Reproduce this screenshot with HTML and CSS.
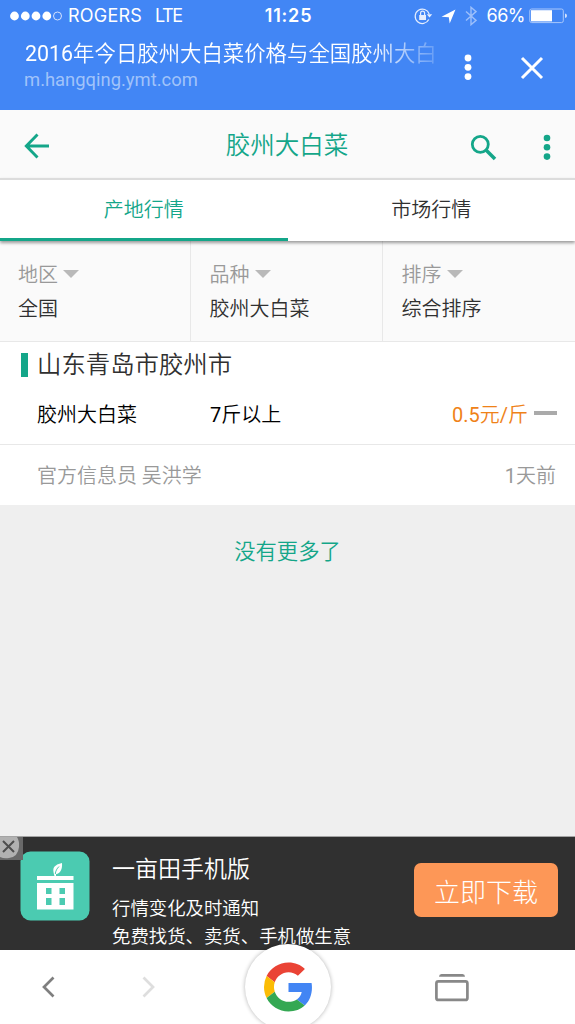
FILE: index.html
```html
<!DOCTYPE html>
<html lang="zh-CN">
<head>
<meta charset="utf-8">
<title>胶州大白菜</title>
<link rel="stylesheet" href="styles.css">
</head>
<body>
<div class="screen">
  <div class="browser">
    <div class="status">
      <div class="status-left">
        <svg class="signal" width="52" height="10" viewBox="0 0 52 10"><g fill="#fff"><circle cx="4.5" cy="5" r="4.4"/><circle cx="15.3" cy="5" r="4.4"/><circle cx="26" cy="5" r="4.4"/><circle cx="36.8" cy="5" r="4.4"/></g><circle cx="47.5" cy="5" r="4" fill="none" stroke="#d4e2fd"/></svg>
        <span class="carrier">ROGERS</span><span class="network">LTE</span>
      </div>
      <span class="clock">11:25</span>
      <div class="status-right">
        <svg width="19" height="18" viewBox="0 0 19 18" fill="none" stroke="#e6eefe" stroke-width="1.2"><path d="M14.8 12.6A7.2 7.2 0 1 1 15.2 7"/><path d="M12.8 7.2h5.4l-2.700 3.400z" fill="#e6eefe" stroke="none"/><rect x="5.2" y="8" width="6.8" height="5" fill="#e6eefe" stroke="none"/><path d="M6.600 8V6.200a2 2 0 0 1 4 0V8"/></svg>
        <svg class="locate" width="15" height="15" viewBox="0 0 15 15"><path d="M14.500.5 8.700 14.500 7.800 8.300 .5 7.700z" fill="#fff"/></svg>
        <svg class="bluetooth" width="12" height="20" viewBox="0 0 12 20"><path d="M1 5.500 11 14.400 6 18.700V1.300l5 4.300L1 14.500" fill="none" stroke="#9cbffb" stroke-width="1.4"/></svg>
        <span class="percent">66%</span>
        <svg width="39" height="16" viewBox="0 0 39 16"><rect x=".8" y="1" width="33.500" height="13.600" rx="1.800" fill="none" stroke="#a9c7fb"/><rect x="2" y="2.200" width="21" height="11.200" fill="#fff"/><path d="M36 5.500q2 .5 2 2.300t-2 2.300z" fill="#d4e2fd"/></svg>
      </div>
    </div>
    <div class="address">
      <div class="address-text">
        <div class="page-title"><span class="latin">2016</span>年今日胶州大白菜价格与全国胶州大白</div>
        <div class="page-url">m.hangqing.ymt.com</div>
      </div>
      <svg class="address-more" width="8" height="27" viewBox="0 0 8 27" fill="#fff"><circle cx="4" cy="4" r="3.400"/><circle cx="4" cy="13.300" r="3.400"/><circle cx="4" cy="22.600" r="3.400"/></svg>
      <svg class="address-close" width="24" height="24" viewBox="0 0 24 24"><path d="m2 2 20 20M22 2 2 22" stroke="#fff" stroke-width="3"/></svg>
    </div>
  </div>

  <header class="header">
    <svg width="26" height="26" viewBox="0 0 26 26" fill="none" stroke="#14a689" stroke-width="2.900"><path d="M25 13H3M13.500 1.500 2.300 13l11.200 11.500"/></svg>
    <h1 class="title">胶州大白菜</h1>
    <svg class="search" width="27" height="27" viewBox="0 0 27 27" fill="none" stroke="#14a689"><circle cx="10.300" cy="10.300" r="8" stroke-width="2.800"/><path d="m16 16 9 9" stroke-width="3.500"/></svg>
    <svg class="menu" width="8" height="27" viewBox="0 0 8 27" fill="#14a689"><circle cx="4" cy="4" r="3.300"/><circle cx="4" cy="13.300" r="3.300"/><circle cx="4" cy="22.600" r="3.300"/></svg>
  </header>

  <nav class="tabs"><div class="tab tab-active">产地行情</div><div class="tab">市场行情</div></nav>

  <section class="filters">
    <div class="filter"><div class="filter-label">地区<i class="caret"></i></div><div>全国</div></div>
    <div class="filter"><div class="filter-label">品种<i class="caret"></i></div><div>胶州大白菜</div></div>
    <div class="filter"><div class="filter-label">排序<i class="caret"></i></div><div>综合排序</div></div>
  </section>

  <section class="listing">
    <h2 class="place"><i class="marker"></i>山东青岛市胶州市</h2>
    <div class="offer"><span class="product">胶州大白菜</span><span class="spec"><span class="latin">7</span>斤以上</span><span class="price"><span class="latin">0.5</span>元<span class="latin">/</span>斤</span><i class="flat"></i></div>
    <div class="source"><span>官方信息员 吴洪学</span><span class="age"><span class="latin">1</span>天前</span></div>
  </section>

  <main class="rest"><p class="no-more">没有更多了</p></main>

  <aside class="promo">
    <svg class="promo-close" width="23" height="23" viewBox="0 0 23 23"><path fill="#696969" d="M0 0h23v23H0z"/><path d="M0 0h17q2.500 4 2 10-1 10-10 11-5 .8-9-1z" fill="#b1b1b1"/><path d="m3 4 11 11M14 4 3 15" stroke="#4d4d4d" stroke-width="2"/></svg>
    <svg class="app-icon" width="70" height="70" viewBox="0 0 70 70"><rect x=".5" y=".5" width="69" height="69" rx="10" fill="#4bcbb1"/><path fill="#fff" d="M17 25h36.500v4H17zM17 32h36.500v26.500H17z"/><path fill="#4bcbb1" d="M26 37h5.500v6H26zM39.500 37H45v6h-5.500zM26 47h5.500v7H26zM39.500 47H45v7h-5.500z"/><path fill="#fff" d="M34.500 25c-.5-2-1-3-1.200-6 .2-4 4-6 8.700-7 .5 6-1.500 10.500-6 11.300V25z"/><path d="M35.300 23c.2-3 1.700-5.500 3.700-7.500" fill="none" stroke="#4bcbb1"/></svg>
    <div class="promo-copy"><div class="promo-title">一亩田手机版</div><div>行情变化及时通知</div><div>免费找货、卖货、手机做生意</div></div>
    <div class="download">立即下载</div>
  </aside>

  <footer class="toolbar">
    <svg width="14" height="22" viewBox="0 0 14 22"><path d="M12.500 1.500 3 11l9.500 9.500" fill="none" stroke="#7f7f7f" stroke-width="2.700"/></svg>
    <svg class="forward" width="14" height="22" viewBox="0 0 14 22"><path d="M1.500 1.500 11 11l-9.500 9.500" fill="none" stroke="#dedede" stroke-width="2.700"/></svg>
    <div class="home"><svg width="49" height="50" viewBox="0 0 48 48"><path fill="#EA4335" d="M24 9.500c3.540 0 6.710 1.220 9.210 3.600l6.850-6.850C35.900 2.380 30.470 0 24 0 14.620 0 6.510 5.380 2.560 13.220l7.980 6.190C12.430 13.720 17.740 9.500 24 9.500z"/><path fill="#4285F4" d="M46.980 24.550c0-1.570-.15-3.090-.38-4.550H24v9.020h12.940c-.58 2.960-2.260 5.480-4.780 7.180l7.730 6c4.510-4.180 7.090-10.360 7.090-17.650z"/><path fill="#FBBC05" d="M10.530 28.590A14.500 14.500 0 0 1 9.770 24c0-1.600.27-3.140.76-4.590l-7.980-6.190A23.900 23.900 0 0 0 0 24c0 3.880.92 7.540 2.560 10.780l7.970-6.190z"/><path fill="#34A853" d="M24 48c6.480 0 11.930-2.130 15.890-5.810l-7.730-6c-2.150 1.450-4.920 2.300-8.160 2.300-6.260 0-11.570-4.220-13.470-9.910l-7.980 6.190C6.510 42.620 14.620 48 24 48z"/></svg></div>
    <svg class="windows" width="36" height="29" viewBox="0 0 36 29"><path d="M5 3.800q0-2.500 2.500-2.800h21q2.500.3 2.500 2.800z" fill="#888"/><rect x="2.400" y="8.400" width="31" height="18.500" rx="2" fill="none" stroke="#888" stroke-width="2.700"/></svg>
  </footer>
</div>
</body>
</html>
```
FILE: styles.css
```css
* { box-sizing: border-box; }
body { margin: 0; font-family: Roboto, "Noto Sans CJK SC", sans-serif; font-weight: 350; font-size: 20px; color: #303030; }
svg { display: block; flex: none; }
h1, h2, p { margin: 0; font-weight: inherit; }
.latin { font-weight: 400; }
.screen { width: 575px; height: 1024px; display: flex; flex-direction: column; overflow: hidden; background: #efefef; }
.screen > * { flex-shrink: 0; }

.browser { height: 110px; background: #4286f5; color: #fff; }
.status { height: 32px; display: grid; grid-template-columns: 1fr auto 1fr; align-items: center; padding: 0 7px 0 9px; font-family: Inter, sans-serif; font-size: 18px; font-weight: 400; line-height: 32px; }
.status-left, .status-right { display: flex; align-items: center; }
.signal { margin-left: 1px; }
.carrier { margin-left: 6px; width: 87px; letter-spacing: 0.2px; }
.network { letter-spacing: -1.4px; }
.clock { font-weight: 600; letter-spacing: 0.8px; }
.status-right { justify-content: flex-end; }
.locate { margin-left: 8px; }
.bluetooth { margin-left: 9px; }
.percent { margin: 0 4px 0 10px; letter-spacing: -0.5px; }
.address { height: 78px; display: flex; padding-left: 24px; }
.address-text { width: 412px; padding-top: 7px; overflow: hidden; white-space: nowrap; }
.page-title { padding-left: 1px; font-size: 21.4px; line-height: 29px; -webkit-mask-image: linear-gradient(90deg, #000 345px, rgba(0,0,0,.2) 411px); mask-image: linear-gradient(90deg, #000 345px, rgba(0,0,0,.2) 411px); }
.page-url { margin-top: 1px; font-size: 18.4px; line-height: 22px; font-weight: 400; color: #a0c3fa; }
.address-more { margin: 22px 0 0 28px; }
.address-close { margin: 24px 0 0 48px; }

.header { height: 68px; display: flex; align-items: center; padding: 3px 24px 0; background: #fafafa; }
.title { flex: 1; margin-left: 74px; text-align: center; font-size: 24.5px; line-height: 36px; color: #14a689; padding-right: 20px; }
.search { margin: 3px 46px 0 0; }
.menu { margin-top: 3px; }
.tabs { position: relative; height: 63px; display: flex; border-top: 2px solid #dcdcdc; background: #fff; box-shadow: 0 2px 3px rgba(0,0,0,.38); }
.tab { flex: 1; text-align: center; line-height: 61px; border-bottom: 3px solid transparent; }
.tab-active { color: #14a689; border-color: #14a689; }
.filters { height: 101px; display: grid; grid-template-columns: 191px 192px 192px; background: #fafafa; border-bottom: 1px solid #e8e8e8; }
.filter { padding: 17px 0 0 18px; border-right: 1px solid #e8e8e8; line-height: 34px; }
.filter:last-child { border-right: 0; }
.filter:not(:first-child) { padding-left: 18.5px; }
.filter-label { display: flex; align-items: center; color: #999; }
.caret { margin: -2px 0 0 5px; border: 8px solid transparent; border-top: 8px solid #b9b9b9; border-bottom: 0; }

.listing { height: 163px; background: #fff; }
.place { height: 46px; display: flex; align-items: center; padding-left: 21px; font-size: 24.4px; line-height: 46px; }
.marker { width: 7px; height: 24px; margin: -1px 9px 0 0; background: #14a689; }
.offer { height: 56px; display: flex; align-items: center; padding: 0 18px 6px 37px; color: #000; }
.product { width: 173px; }
.price { margin-left: auto; color: #ef8218; }
.flat { width: 23px; height: 4px; margin: -1px 0 0 6px; background: #aaa; }
.source { height: 61px; display: flex; justify-content: space-between; align-items: center; padding: 0 19px 2px 37px; border-top: 1px solid #e8e8e8; color: #999; }
.rest { flex: 1; }
.no-more { margin-top: 31px; text-align: center; font-size: 21.3px; line-height: 32px; color: #14a689; }

.promo { position: relative; height: 114px; display: flex; padding: 14px 17px 0 20px; border-top: 1px solid #a4a4a4; background: #303030; color: #fff; }
.promo-close { position: absolute; left: 0; top: 0; }
.promo-copy { margin-left: 22px; padding-top: 2px; flex: 1; font-size: 18.4px; line-height: 28px; white-space: nowrap; }
.promo-title { font-size: 23px; line-height: 34px; margin-bottom: 8px; }
.download { width: 144px; height: 54px; margin-top: 12px; border-radius: 7px; background: #fd9757; font-size: 26px; font-weight: 300; line-height: 60px; text-align: center; }

.toolbar { position: relative; height: 74px; display: flex; align-items: center; padding-left: 41px; background: #fff; }
.forward { margin-left: 87px; }
.home { width: 86px; height: 86px; margin-left: 89px; border-radius: 50%; background: #fff; box-shadow: 0 0 4px rgba(0,0,0,.3); display: flex; align-items: center; justify-content: center; }
.windows { margin-left: 103px; }
```
